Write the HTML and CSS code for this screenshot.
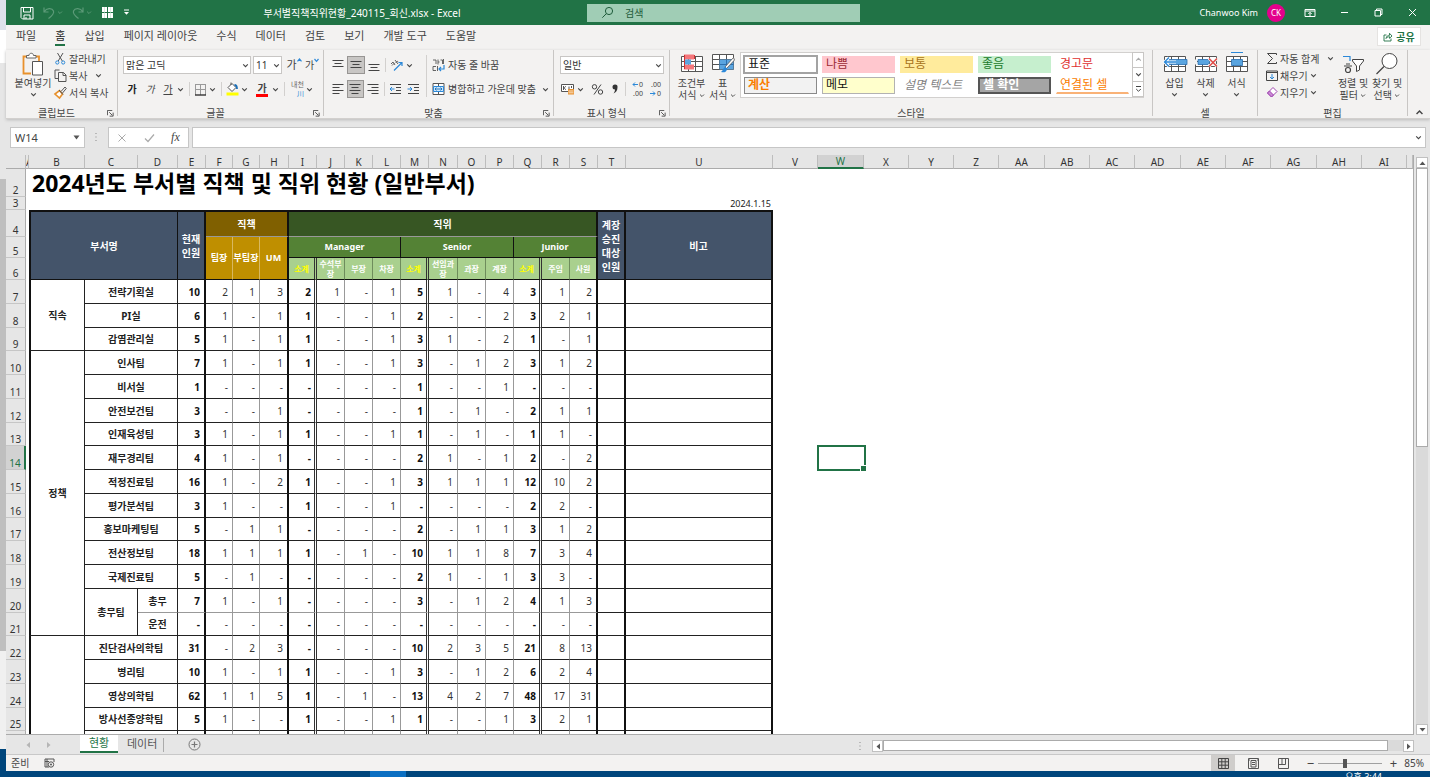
FILE: index.html
```html
<!DOCTYPE html>
<html lang="ko">
<head>
<meta charset="utf-8">
<title>부서별직책직위현황_240115_회신.xlsx - Excel</title>
<link rel="stylesheet" href="styles.css">
</head>
<body>
<svg class="defs" aria-hidden="true">
  <symbol id="chev" viewBox="0 0 7 7"><path d="M1.2 2.4 3.5 4.7 5.8 2.4" fill="none" stroke="currentColor" stroke-width="1.1"/></symbol>
  <symbol id="launch" viewBox="0 0 8 8"><path d="M.5 6V.5H6M2.5 2.5 6 6M7 3V7H3" fill="none" stroke="#444" /></symbol>
  <symbol id="gridtable" viewBox="0 0 24 20"><path d="M1.5 2.500h21v15h-21zM1.500 7.500h21M1.500 12.500h21M8.500 2.500v15M15.500 2.500v15" fill="#fff" stroke="#555"/></symbol>
</svg>
<div class="screen">
  <div class="desktop">
    <div class="behind"><i class="b1"></i><i class="b2"></i><i class="b3"></i><i class="b4"></i><i class="b5"></i><i class="b6"></i></div>
    <main class="app">
      <header class="titlebar">
        <div class="quick">
          <button aria-label="저장"><svg width="14" height="14" viewBox="0 0 14 14"><path d="M1 1.500h12v11.500H2.500L1 11.500zM3.500 1.500v4.500h7V1.500M4 13V9h6v4M6 11v2" fill="none" stroke="#fff"/></svg></button>
          <button class="dim" aria-label="실행 취소"><svg width="12" height="14" viewBox="0 0 12 14"><path d="M1 1.500v4.500h4.500M1.200 5.800C3.500 2 9 1.500 10.500 5c1 3-1.500 5-5 7.500" fill="none" stroke="currentColor" stroke-width="1.200"/></svg><svg class="ch"><use href="#chev"/></svg></button>
          <button class="dim" aria-label="다시 실행"><svg width="12" height="14" viewBox="0 0 12 14"><path d="M11 1.500v4.500H6.500M10.800 5.800C8.500 2 3 1.500 1.500 5c-1 3 1.500 5 5 7.500" fill="none" stroke="currentColor" stroke-width="1.200"/></svg><svg class="ch"><use href="#chev"/></svg></button>
          <button aria-label="표"><svg width="13" height="13" viewBox="0 0 13 13"><path d="M1 1h5v5H1zM7 1h5v5H7zM1 7h5v5H1zM7 7h5v5H7z" fill="#fff"/><path d="M3.500 1v11M9.500 1v11" stroke="#bfe0cd" stroke-width=".6"/></svg></button>
          <button aria-label="빠른 실행 도구 모음 사용자 지정"><svg width="7" height="7" viewBox="0 0 7 7"><path d="M1 1h5" stroke="#fff"/><path d="M1 3h5L3.500 5.800z" fill="#fff"/></svg></button>
        </div>
        <h1 class="doc">부서별직책직위현황_240115_회신.xlsx - Excel</h1>
        <label class="search"><svg width="13" height="13" viewBox="0 0 13 13"><circle cx="8" cy="5" r="3.600" fill="none" stroke="#1f5c3b"/><path d="M5.400 7.600 1.300 11.700" stroke="#1f5c3b"/></svg><input type="search" placeholder="검색" aria-label="검색"></label>
        <div class="account"><span>Chanwoo Kim</span><span class="avatar">CK</span></div>
        <div class="winbtns">
          <button aria-label="리본 표시 옵션"><svg width="12" height="10" viewBox="0 0 12 10"><path d="M1 1.500h10v7H1zM1 3h10M6 8V4.500M4.300 6 6 4.300 7.700 6" fill="none" stroke="#fff"/></svg></button>
          <button aria-label="최소화"><svg width="9" height="9" viewBox="0 0 9 9"><path d="M1 4.500h7" stroke="#fff"/></svg></button>
          <button aria-label="복원"><svg width="9" height="9" viewBox="0 0 9 9"><path d="M1 2.500h5.500V8H1zM2.500 2.500V1H8v5.500H6.500" fill="none" stroke="#fff"/></svg></button>
          <button aria-label="닫기"><svg width="9" height="9" viewBox="0 0 9 9"><path d="M1 1l7 7M8 1 1 8" stroke="#fff"/></svg></button>
        </div>
      </header>

      <nav class="tabs">
        <button>파일</button><button class="on">홈</button><button>삽입</button><button>페이지 레이아웃</button><button>수식</button><button>데이터</button><button>검토</button><button>보기</button><button>개발 도구</button><button>도움말</button>
        <button class="share"><svg width="10" height="10" viewBox="0 0 10 10"><path d="M3.500 3H1v6h7V6.500M3 6.500C3.500 4 5 3.300 6.500 3.300V1.300L9 4 6.500 6.300V4.700C5 4.700 4 5.300 3 6.500z" fill="none" stroke="#217346" stroke-width=".9"/></svg>공유</button>
      </nav>

      <section class="ribbon">
        <div class="group g-clip">
          <div class="body">
            <button class="big"><svg width="24" height="24" viewBox="0 0 24 24"><path d="M10 21.500H2.500v-17H18V9" fill="none" stroke="#e8912d" stroke-width="1.800"/><path d="M5.500 6V3.500H8C8 .5 12.500.5 12.500 3.500H15V6z" fill="#fff" stroke="#666"/><path d="M11.500 9.500h10v13.500h-10z" fill="#fff" stroke="#555"/></svg><span>붙여넣기</span><svg class="ch"><use href="#chev"/></svg></button>
            <div class="stack">
              <button><svg width="13" height="13" viewBox="0 0 13 13"><path d="M3.500 1 8.300 9M9 1 4.200 9" stroke="#555" fill="none"/><circle cx="3.300" cy="10.500" r="1.600" fill="none" stroke="#2b88d8"/><circle cx="9.200" cy="10.500" r="1.600" fill="none" stroke="#2b88d8"/></svg>잘라내기</button>
              <button><svg width="13" height="13" viewBox="0 0 13 13"><path d="M4 9.500H1v-8.500h4.500M4.500 3.500h5L12 6v6.500H4.500zM9 3.500V6.500h3" fill="none" stroke="#555"/></svg>복사<svg class="ch gapl"><use href="#chev"/></svg></button>
              <button><svg width="13" height="13" viewBox="0 0 13 13"><path d="M1 8 5.500 4.500 8.500 8 5.500 12z" fill="#fff" stroke="#e8912d" stroke-width="1.600"/><path d="M5 4 9 8.500M7 5.500 11 1l1.300 1.500L8.500 7" fill="none" stroke="#555"/></svg>서식 복사</button>
            </div>
          </div>
          <footer><span>클립보드</span><svg class="la"><use href="#launch"/></svg></footer>
        </div>

        <div class="group g-font">
          <div class="body rows">
            <div class="row">
              <span class="combo w-font"><select aria-label="글꼴"><option>맑은 고딕</option></select><svg class="ch"><use href="#chev"/></svg></span>
              <span class="combo w-size"><select aria-label="글꼴 크기"><option>11</option></select><svg class="ch"><use href="#chev"/></svg></span>
              <button class="ic w18 glyph">가<svg width="5" height="4" viewBox="0 0 5 4"><path d="M.5 3.300 2.500 1 4.500 3.300" fill="none" stroke="#2b88d8" stroke-width="1.200"/></svg></button><button class="ic w18 glyph sm">가<svg width="5" height="4" viewBox="0 0 5 4"><path d="M.5 1 2.500 3.300 4.500 1" fill="none" stroke="#2b88d8" stroke-width="1.200"/></svg></button>
            </div>
            <div class="row">
              <button class="ic w18 bold">가</button><button class="ic w18 ital">가</button><button class="ic w18 und">가</button><svg class="ch"><use href="#chev"/></svg>
              <i class="sep"></i>
              <button class="ic w18" aria-label="테두리"><svg width="13" height="13" viewBox="0 0 13 13"><path d="M1 1.500h11M1.500 1v11M11.500 1v11M6.500 1v11M1 6.500h11" fill="none" stroke="#999"/><path d="M1 12h11" stroke="#333" stroke-width="1.400"/></svg></button><svg class="ch"><use href="#chev"/></svg>
              <i class="sep"></i>
              <button class="ic w18" aria-label="채우기 색"><svg width="13" height="14" viewBox="0 0 13 14"><path d="M6 1.500 10 5.500 6 9.500 2 5.500z" fill="#fff" stroke="#555"/><path d="M5 3V.500" stroke="#555"/><path d="M8.500 3c2 0 2.500 1.500 2.500 4" fill="none" stroke="#1a6fb8" stroke-width="1.800"/><path d="M.5 10.500h12V13.500H.5z" fill="#ff0"/></svg></button><svg class="ch"><use href="#chev"/></svg>
              <button class="ic fontcolor">가</button><svg class="ch"><use href="#chev"/></svg>
              <i class="sep"></i>
              <button class="ic ruby"><span>내천</span><b>川</b></button><svg class="ch"><use href="#chev"/></svg>
            </div>
          </div>
          <footer><span>글꼴</span><svg class="la"><use href="#launch"/></svg></footer>
        </div>

        <div class="group g-align">
          <div class="body">
            <div class="rows">
              <div class="row">
                <button class="ic w18" aria-label="위쪽 맞춤"><svg width="12" height="14" viewBox="0 0 12 14"><path d="M.5 2.500h11M2.500 5.500h7M.5 8.500h11" stroke="#444"/></svg></button>
                <button class="ic w18 sel" aria-label="가운데 맞춤"><svg width="12" height="14" viewBox="0 0 12 14"><path d="M.5 3.500h11M2.500 6.500h7M.5 9.500h11" stroke="#444"/></svg></button>
                <button class="ic w18" aria-label="아래쪽 맞춤"><svg width="12" height="14" viewBox="0 0 12 14"><path d="M.5 6.500h11M2.500 9.500h7M.5 12.500h11" stroke="#444"/></svg></button>
                <i class="sep tall"></i>
                <button class="ic w18" aria-label="방향"><svg width="14" height="14" viewBox="0 0 14 14"><path d="M4 12.500 12 4.500M8.500 4.500H12V8" stroke="#2b88d8" fill="none" stroke-width="1.200"/><path d="M1 6l2-2 2 3M2 7.500 4.500 5M5 2l3 4M6 5c0-2 2-2 2-1" stroke="#555" fill="none" stroke-width=".9"/></svg></button><svg class="ch"><use href="#chev"/></svg>
              </div>
              <div class="row">
                <button class="ic w18" aria-label="왼쪽"><svg width="12" height="14" viewBox="0 0 12 14"><path d="M.5 2.500h11M.5 5.500h7M.5 8.500h11M.5 11.500h7" stroke="#444"/></svg></button>
                <button class="ic w18 sel" aria-label="가운데"><svg width="12" height="14" viewBox="0 0 12 14"><path d="M.5 2.500h11M2.500 5.500h7M.5 8.500h11M2.500 11.500h7" stroke="#444"/></svg></button>
                <button class="ic w18" aria-label="오른쪽"><svg width="12" height="14" viewBox="0 0 12 14"><path d="M.5 2.500h11M4.500 5.500h7M.5 8.500h11M4.500 11.500h7" stroke="#444"/></svg></button>
                <i class="sep tall"></i>
                <button class="ic w18" aria-label="내어쓰기"><svg width="13" height="14" viewBox="0 0 13 14"><path d="M1 2.500h11M7 5.500h5M7 8.500h5M1 11.500h11" stroke="#444"/><path d="M5.500 7H1M3 5 1 7l2 2" fill="none" stroke="#2b88d8"/></svg></button>
                <button class="ic w18" aria-label="들여쓰기"><svg width="13" height="14" viewBox="0 0 13 14"><path d="M1 2.500h11M7 5.500h5M7 8.500h5M1 11.500h11" stroke="#444"/><path d="M.5 7H5M3 5l2 2-2 2" fill="none" stroke="#2b88d8"/></svg></button>
              </div>
            </div>
            <i class="vsep"></i>
            <div class="rows">
              <div class="row"><button class="txt"><svg width="13" height="14" viewBox="0 0 13 14"><path d="M1 2h3v4M6 1.500v5M6 4h1.500M8.500 2h2v4M11.500 1v5M1 8.500h3M1 8.500v4h3M5.500 8v5" stroke="#555" fill="none" stroke-width=".9"/><path d="M12 7v4H7.500M9 9l-2 2 2 2" fill="none" stroke="#2b88d8" stroke-width="1.200"/></svg>자동 줄 바꿈</button></div>
              <div class="row"><button class="txt"><svg width="13" height="14" viewBox="0 0 13 14"><path d="M1 1.500h11v11H1zM6.500 1.500v3M6.500 9.500v3" fill="#fff" stroke="#555"/><path d="M1.500 4.500h10v5h-10z" fill="#cfe6f8" stroke="#2b88d8"/><path d="M3 7h7M4.500 5.500 3 7l1.500 1.500M8.500 5.500 10 7 8.500 8.500" fill="none" stroke="#1a6fb8" stroke-width=".9"/></svg>병합하고 가운데 맞춤</button><svg class="ch gap"><use href="#chev"/></svg></div>
            </div>
          </div>
          <footer><span>맞춤</span><svg class="la"><use href="#launch"/></svg></footer>
        </div>

        <div class="group g-num">
          <div class="body rows">
            <div class="row"><span class="combo w-num"><select aria-label="표시 형식"><option>일반</option></select><svg class="ch"><use href="#chev"/></svg></span></div>
            <div class="row">
              <button class="ic w18" aria-label="회계 표시 형식"><svg width="14" height="12" viewBox="0 0 14 12"><path d="M.5 1.500h12v7H.5z" fill="#fff" stroke="#555"/><path d="M5 3.500c-2 0-2 3 0 3M8 3.500v3M2.500 3v4M10.500 3v2" stroke="#555" fill="none"/><path d="M7 6h6v5.500H7z" fill="#e8912d"/><path d="M7.500 8h5M7.500 9.800h5" stroke="#fff" stroke-width=".7"/></svg></button><svg class="ch"><use href="#chev"/></svg>
              <button class="ic w18" aria-label="백분율"><svg width="13" height="13" viewBox="0 0 13 13"><circle cx="3.500" cy="3.800" r="2.200" fill="none" stroke="#444"/><circle cx="9.500" cy="9" r="2.200" fill="none" stroke="#444"/><path d="M10 1.500 3 11.500" stroke="#444"/></svg></button>
              <button class="ic w18" aria-label="쉼표"><svg width="8" height="12" viewBox="0 0 8 12"><path d="M4 1.500a2.500 2.500 0 0 1 2.500 2.800C6.500 7.500 5 9.500 2.500 10.500 3.500 9 4 8 4 6.500A2.500 2.500 0 0 1 4 1.500z" fill="#333"/></svg></button>
              <i class="sep"></i>
              <button class="ic w18 dec" aria-label="자릿수 늘림"><span><svg width="6" height="5" viewBox="0 0 6 5"><path d="M6 2.500H1M3 .500 1 2.500 3 4.500" fill="none" stroke="#2b88d8"/></svg>0</span><span>.00</span></button>
              <button class="ic w18 dec" aria-label="자릿수 줄임"><span>.00</span><span><svg width="6" height="5" viewBox="0 0 6 5"><path d="M0 2.500H5M3 .500 5 2.500 3 4.500" fill="none" stroke="#2b88d8"/></svg>0</span></button>
            </div>
          </div>
          <footer><span>표시 형식</span><svg class="la"><use href="#launch"/></svg></footer>
        </div>

        <div class="group g-style">
          <div class="body">
            <button class="big w32"><svg width="24" height="20"><use href="#gridtable"/><path d="M4 2.500h10v5H4zM4 12.500h10v5H4z" fill="#f4777c"/><path d="M4 7.500h7v5H4z" fill="#5aa5e0"/><path d="M4.500 3v14M14.500 3v4" stroke="#c33"/></svg><span>조건부<br>서식 <svg class="ch"><use href="#chev"/></svg></span></button>
            <button class="big w30"><svg width="24" height="22"><use href="#gridtable" height="20"/><path d="M8.500 7.500h14v10h-14z" fill="#5aa5e0"/><path d="M8.500 12.500h14M15.500 7.500v10" stroke="#2b6fae"/><path d="M22.500 5.500 14 15l1.500 1.500L23.500 8z" fill="#fff" stroke="#555" stroke-width=".8"/><path d="M14.500 15c-2 0-2 3-4.500 5 3 1 6 0 6-3.500z" fill="#2b88d8"/></svg><span>표<br>서식 <svg class="ch"><use href="#chev"/></svg></span></button>
            <div class="gallery">
              <div class="swatches">
                <button class="s-normal">표준</button><button class="s-bad">나쁨</button><button class="s-neutral">보통</button><button class="s-good">좋음</button><button class="s-warn">경고문</button>
                <button class="s-calc">계산</button><button class="s-memo">메모</button><button class="s-desc">설명 텍스트</button><button class="s-check">셀 확인</button><button class="s-link">연결된 셀</button>
              </div>
              <div class="gscroll"><button class="off" aria-label="위로"><svg class="ch flip"><use href="#chev"/></svg></button><button aria-label="아래로"><svg class="ch"><use href="#chev"/></svg></button><button aria-label="자세히"><svg width="7" height="8" viewBox="0 0 7 8"><path d="M1 1.500h5M1.200 4 3.500 6.300 5.800 4" fill="none" stroke="#444"/></svg></button></div>
            </div>
          </div>
          <footer><span>스타일</span></footer>
        </div>

        <div class="group g-cell">
          <div class="body">
            <button class="big w32"><svg width="24" height="20"><use href="#gridtable"/><path d="M6 7.500h18v5H6z" fill="#5aa5e0" stroke="#2b6fae" stroke-width=".8"/><path d="M13 10H2M6 5.500 1.500 10 6 14.500" fill="none" stroke="#fff" stroke-width="3"/><path d="M13 10H2M6 5.500 1.500 10 6 14.500" fill="none" stroke="#2b88d8" stroke-width="1.300"/></svg><span>삽입</span><svg class="ch"><use href="#chev"/></svg></button>
            <button class="big w30"><svg width="24" height="20"><use href="#gridtable"/><path d="M0 7.500h3v5H0z" fill="#f3f2f1"/><path d="M4 7.500h10l2 2.500-2 2.500H4z" fill="#5aa5e0" stroke="#2b6fae" stroke-width=".8"/><path d="M15 6.500l8 8M23 6.500l-8 8" stroke="#f3f2f1" stroke-width="3"/><path d="M15 6.500l8 8M23 6.500l-8 8" stroke="#e0443e" stroke-width="1.300"/></svg><span>삭제</span><svg class="ch"><use href="#chev"/></svg></button>
            <button class="big w32"><svg width="24" height="20"><use href="#gridtable"/><path d="M6.500 7.500h11v6h-11z" fill="#5aa5e0" stroke="#2b6fae" stroke-width=".8"/><path d="M6 .5h12" stroke="#2b88d8"/></svg><span>서식</span><svg class="ch"><use href="#chev"/></svg></button>
          </div>
          <footer><span>셀</span></footer>
        </div>

        <div class="group g-edit">
          <div class="body">
            <div class="stack">
              <button><svg width="12" height="13" viewBox="0 0 12 13"><path d="M10.500 3V1.500H1.500L6.500 6.500 1.500 11.500h9V10" fill="none" stroke="#444"/></svg>자동 합계<svg class="ch gapl"><use href="#chev"/></svg></button>
              <button><svg width="12" height="13" viewBox="0 0 12 13"><path d="M.5 2h11v9.500H.5zM.5 3.500h11" fill="none" stroke="#444"/><path d="M6 5v5M4 8l2 2 2-2" fill="none" stroke="#2b88d8"/></svg>채우기<svg class="ch"><use href="#chev"/></svg></button>
              <button><svg width="12" height="13" viewBox="0 0 12 13"><path d="M7 1.500 11 5.500 5.500 11 1.500 7z" fill="#fff" stroke="#a044b0"/><path d="M3.500 5 7.500 9 5.500 11 1.500 7z" fill="#c98ad4" stroke="#a044b0"/></svg>지우기<svg class="ch"><use href="#chev"/></svg></button>
            </div>
            <button class="big w34"><svg width="24" height="22" viewBox="0 0 24 22"><path d="M2 3.500h7V8" fill="none" stroke="#2b88d8" stroke-width="1.200"/><path d="M5 11h4M3 13h8" stroke="#444" stroke-width="1.200"/><circle cx="7" cy="17" r="2.500" fill="none" stroke="#444" stroke-width="1.200"/><path d="M11.500 6.500h11v1.500L18.500 13v4l-3 1.500V13L11.500 8z" fill="#fff" stroke="#444"/></svg><span>정렬 및<br>필터 <svg class="ch"><use href="#chev"/></svg></span></button>
            <button class="big w34"><svg width="24" height="24" viewBox="0 0 24 24"><circle cx="14.500" cy="9" r="7.500" fill="#fff" stroke="#444"/><path d="M9 14.500 1.500 22" stroke="#444" stroke-width="1.200"/></svg><span>찾기 및<br>선택 <svg class="ch"><use href="#chev"/></svg></span></button>
          </div>
          <footer><span>편집</span></footer>
        </div>
        <button class="collapse" aria-label="리본 축소"><svg class="ch flip"><use href="#chev"/></svg></button>
      </section>

      <section class="formula">
        <div class="namebox"><input value="W14" aria-label="이름 상자"><svg width="7" height="5" viewBox="0 0 7 5"><path d="M.5.500h6L3.500 4.500z" fill="#555"/></svg></div>
        <svg class="grip" width="4" height="10" viewBox="0 0 4 10"><path d="M2 1v1M2 4.500v1M2 8v1" stroke="#999" stroke-width="1.200"/></svg>
        <div class="fbtns">
          <button aria-label="취소"><svg width="10" height="10" viewBox="0 0 10 10"><path d="M1.500 1.500l7 7M8.500 1.500l-7 7" stroke="#aaa"/></svg></button>
          <button aria-label="입력"><svg width="11" height="10" viewBox="0 0 11 10"><path d="M1 5.500 4 8.500 10 1.500" fill="none" stroke="#aaa" stroke-width="1.200"/></svg></button>
          <button class="fx">fx</button>
        </div>
        <div class="finput"><input aria-label="수식 입력줄"><svg class="ch"><use href="#chev"/></svg></div>
      </section>

      <section class="work">
        <div class="sheet"><table id="grid"></table></div>
        <div class="vscroll"><button aria-label="위로 스크롤"><svg width="7" height="4" viewBox="0 0 7 4"><path d="M.5 4h6L3.500.500z" fill="#555"/></svg></button><i class="thumb"></i><i class="track"></i><button aria-label="아래로 스크롤"><svg width="7" height="4" viewBox="0 0 7 4"><path d="M.5 0h6L3.500 3.500z" fill="#555"/></svg></button></div>
      </section>

      <nav class="sheets">
        <div class="navs"><button aria-label="이전 시트"><svg width="4" height="6" viewBox="0 0 4 6"><path d="M4 0v6L.500 3z" fill="#b5b5b5"/></svg></button><button aria-label="다음 시트"><svg width="4" height="6" viewBox="0 0 4 6"><path d="M0 0v6L3.500 3z" fill="#b5b5b5"/></svg></button></div>
        <button class="tab on">현황</button><button class="tab">데이터</button><i class="tsep"></i>
        <button class="add" aria-label="새 시트"><svg width="13" height="13" viewBox="0 0 13 13"><circle cx="6.500" cy="6.500" r="5.500" fill="none" stroke="#777"/><path d="M6.500 3.500v6M3.500 6.500h6" stroke="#777" stroke-width="1.200"/></svg></button>
        <svg class="grip2" width="4" height="10" viewBox="0 0 4 10"><path d="M2 1v1M2 4.500v1M2 8v1" stroke="#999" stroke-width="1.200"/></svg>
        <div class="hscroll"><button aria-label="왼쪽으로 스크롤"><svg width="4" height="7" viewBox="0 0 4 7"><path d="M4 .5v6L.500 3.500z" fill="#555"/></svg></button><i class="thumb"></i><i class="track"></i><button aria-label="오른쪽으로 스크롤"><svg width="4" height="7" viewBox="0 0 4 7"><path d="M0 .5v6L3.500 3.500z" fill="#555"/></svg></button></div>
      </nav>

      <footer class="status">
        <span>준비</span>
        <svg class="macro" width="11" height="10" viewBox="0 0 11 10"><path d="M1 1h9M1 1v8h4M1 3.500h4M3 1v8M10 1v3" fill="none" stroke="#555"/><circle cx="7" cy="6.500" r="2.700" fill="#f3f2f1" stroke="#555"/><circle cx="7" cy="6.500" r="1" fill="#555"/></svg>
        <div class="views">
          <button class="on" aria-label="기본"><svg width="11" height="11" viewBox="0 0 11 11"><path d="M.5.500h10v10H.5zM.5 3.800h10M.5 7.200h10M3.800.500v10M7.200.500v10" fill="none" stroke="#444"/></svg></button>
          <button aria-label="페이지 레이아웃"><svg width="11" height="11" viewBox="0 0 11 11"><path d="M.5.500h10v10H.5zM3 2.500h5v6.500H3zM4 4.500h3M4 6.500h3M1 2h1M9 2h1" fill="none" stroke="#555"/></svg></button>
          <button aria-label="페이지 나누기"><svg width="11" height="11" viewBox="0 0 11 11"><path d="M.5.500h10v10H.5zM4 .5v6M7.500.500v6M.5 6.500h7" fill="none" stroke="#555"/></svg></button>
        </div>
        <button class="zb" aria-label="축소">−</button><input type="range" min="10" max="190" value="85" aria-label="확대/축소"><button class="zb" aria-label="확대">+</button><span class="pct">85%</span>
      </footer>
    </main>
  </div>
  <div class="taskbar"><i class="task"></i><span>오후 3:44</span></div>
</div>
<script src="grid.js"></script>
</body>
</html>
```
FILE: styles.css
```css
*{box-sizing:border-box}
html,body{height:100%}
body{margin:0;overflow:hidden;font:10px/14px "Noto Sans","Noto Sans CJK KR",sans-serif;color:#444}
button{font:inherit;color:inherit;border:0;background:none;padding:0;margin:0;display:flex;align-items:center;justify-content:center;white-space:nowrap}
input,select{font:inherit;color:inherit;border:0;background:none;padding:0;margin:0;outline:0;appearance:none;min-width:0}
svg{display:block;flex:none;overflow:visible}
i{font-style:normal}
.defs{display:none}
.ch{width:7px;height:7px}
.flip{transform:rotate(180deg)}
.screen{height:100vh;display:flex;flex-direction:column}
.desktop{flex:1;min-height:0;display:flex}
.behind{width:6px;display:flex;flex-direction:column;flex:none}
.b1{height:30px;background:#dde1ea}.b2{height:33px;background:#fff}.b3{height:116px;background:#e6e6e6}.b4{flex:1;background:#bfbfbf}.b5{height:98px;background:#f0f0f0}.b6{height:22px;background:#00467c}
.app{flex:1;min-width:0;display:flex;flex-direction:column;background:#e6e6e6}

.titlebar{height:25px;background:#217346;color:#fff;display:flex;align-items:center;flex:none}
.quick{display:flex;align-items:center;gap:9px;padding-left:14px;width:131px}
.quick .dim{color:#5c9a78;gap:2px}
.quick .dim .ch{width:6px}
.doc{flex:1;margin:0;text-align:center;font-size:10px;font-weight:400}
.search{width:273px;height:18px;background:#a0cdb5;display:flex;align-items:center;padding-left:14px;gap:11px;color:#1f5c3b}
.search input{flex:1}
.search input::placeholder{color:#1f5c3b;opacity:1}
.account{width:425px;display:flex;align-items:center;justify-content:flex-end;gap:9px;font-size:9px}
.avatar{width:18px;height:18px;border-radius:50%;background:#e3008c;font-size:8px;line-height:18px;text-align:center}
.winbtns{display:flex;width:145px;padding-left:8px}
.winbtns button{width:34px;height:25px}

.tabs{height:25px;background:#f3f2f1;display:flex;align-items:flex-start;gap:19px;padding:2px 9px 0 10px;font-size:11px;flex:none}
.tabs button{height:19px;border-bottom:2px solid transparent}
.tabs .on{border-color:#217346;color:#222}
.tabs .share{margin-left:auto;background:#fff;border:1px solid #e5e3e1;width:44px;color:#217346;gap:3px;font-weight:700;font-size:10px}

.ribbon{background:#f3f2f1;height:69px;display:flex;flex:none;border-bottom:1px solid #d2d0ce;box-shadow:0 1px 3px #bbb;position:relative}
.group{display:flex;flex-direction:column;border-right:1px solid #c8c6c4;height:66px;flex:none}
.body{flex:1;display:flex;min-height:0}
.group footer{height:14px;line-height:14px;display:flex;align-items:center;margin-bottom:-4px}
.group footer span{flex:1;text-align:center}
.la{width:7px;height:7px;margin-right:3px}
.g-clip{width:112px}.g-font{width:206px}.g-align{width:230px}.g-num{width:116px}.g-style{flex:1}.g-cell{width:105px}.g-edit{width:150px}
.big{flex-direction:column;justify-content:flex-start;line-height:12px;padding-top:2px}
.big>svg:first-child{height:24px}
.big>.ch{margin-top:2px}
.big span{margin-top:1px;text-align:center}
.big span .ch{display:inline-block;width:6px}
.g-clip .big{width:42px;margin-left:6px}
.w30{width:31px}.w32{width:31px}.w34{width:34px}
.stack{display:flex;flex-direction:column}
.stack button{justify-content:flex-start;height:17px;gap:2px}
.stack .gapl{margin-left:6px}
.rows{display:flex;flex-direction:column;padding-top:3px}
.row{display:flex;align-items:center;height:24px}
.g-font .rows,.g-num .rows{padding-left:5px}
.combo{position:relative;height:18px;border:1px solid #c8c6c4;background:#fff;display:flex}
.combo select{width:100%;padding-left:2px;color:#333}
.combo .ch{position:absolute;right:1px;top:5px}
.w-font{width:128px;margin-right:2px}.w-size{width:29px;margin-right:3px}.w-num{width:104px;margin-left:1px}
.ic{height:18px}
.w18{width:18px}
.glyph{font-size:11px}
.glyph svg{align-self:flex-start;margin-top:2px}
.sm{font-size:10px}
.bold{font-weight:700;color:#222}.ital{font-style:italic}.und{text-decoration:underline}
.sep{width:1px;height:14px;background:#d2d0ce;margin:0 1px 0 5px}
.sep.tall{margin:0 2px}
.fontcolor{font-weight:700;border-bottom:3px solid #f00;width:12px;height:15px;margin:0 4px 0 8px;line-height:10px}
.ruby{display:block;width:18px;font-size:7px;line-height:9px;text-align:right;color:#666;margin-right:2px}
.ruby span,.ruby b{display:block;font-weight:400}.ruby b{color:#2b88d8}
.sel{background:#c8c6c4;border:1px solid #979593}
.g-align .body{padding-left:5px}
.vsep{width:1px;height:42px;background:#d2d0ce;margin:5px 5px 0 4px}
.g-align .rows:first-child{width:93px}
.txt{gap:3px}
.gap{margin-left:6px}
.g-num .row>.ch{margin-right:4px}
.g-num .sep{margin:0 1px}
.dec{display:block;font-size:7px;line-height:9px}
.dec span{display:flex;align-items:center;justify-content:flex-end;gap:1px;padding-right:2px}
.g-style .body{padding-left:6px}
.gallery{flex:1;height:46px;margin:2px 8px 0 2px;border:1px solid #d2d0ce;background:#fff;display:flex}
.swatches{flex:1;display:grid;grid-template-columns:repeat(5,1fr);gap:4px 5px;padding:3px}
.swatches button{justify-content:flex-start;font-size:12px;line-height:14px;padding-left:3px;border:1px solid transparent}
.swatches .s-normal{color:#111;outline:2px solid #a3a3a3;outline-offset:-1px}
.swatches .s-bad{background:#ffc7ce;color:#9c2a35}
.swatches .s-neutral{background:#ffeb9c;color:#a8731a}
.swatches .s-good{background:#c6efce;color:#1b7a2b}
.swatches .s-warn{color:#e03030}
.swatches .s-calc{background:#f2f2f2;border-color:#8a8a8a;color:#fa7d00;font-weight:700}
.swatches .s-memo{background:#ffffcc;border-color:#b2b2b2;color:#111}
.swatches .s-desc{color:#7f7f7f;font-style:italic}
.swatches .s-check{background:#a5a5a5;border:2px solid #555;color:#fff;font-weight:700;line-height:12px}
.swatches .s-link{color:#fa7d00;border-bottom:2px solid #f9b277}
.gscroll{width:11px;display:flex;flex-direction:column}
.gscroll button{flex:1;border:1px solid #c8c6c4;margin:-1px -1px 0 0}
.gscroll .off{color:#aaa}
.g-cell .body{padding-left:6px}
.g-edit .stack{width:78px;padding-left:8px}
.collapse{width:22px;align-items:flex-end;padding-bottom:1px}
.collapse .ch{width:9px;height:9px}

.formula{display:flex;height:36px;padding:8px 4px 7px 4px;align-items:stretch;flex:none}
.formula>div{background:#fff;border:1px solid #c6c6c6;display:flex;align-items:center}
.namebox{width:75px;padding:0 4px;font-size:11px}
.namebox input{flex:1}
.grip{margin:5px 10px 0 9px}
.fbtns{width:81px;justify-content:space-around}
.fx{font:italic 12px "Liberation Serif",serif}
.finput{flex:1;margin-left:3px;padding-right:3px}
.finput input{flex:1}

.work{flex:1;min-height:0;display:flex}
.sheet{flex:1;min-width:0;overflow:hidden;background:#fff;border-right:1px solid #ababab;border-bottom:1px solid #ababab}
.vscroll{width:16px;display:flex;flex-direction:column;align-items:stretch;padding:2px 2px 0}
.vscroll button,.hscroll button{background:#fff;border:1px solid #c0c0c0;height:11px;flex:none}
.vscroll .thumb{flex:278 0 0;background:#fff;border:1px solid #ababab}
.vscroll .track{flex:278 0 0;background:#dadada}

#grid{width:100%;table-layout:fixed;border-collapse:separate;border-spacing:0;color:#333}
#grid th,#grid td{padding:0;overflow:hidden}
#grid th{font-weight:400}
.colhead th{height:14px;line-height:12px;background:#e6e6e6;border-right:1px solid #bdbdbd;border-bottom:1px solid #ababab}
.colhead .cur{background:#d2d2d2;border-bottom:2px solid #217346;color:#217346}
#grid .rh{background:#e6e6e6;border-right:1px solid #ababab;border-bottom:1px solid #c6c6c6;vertical-align:bottom;line-height:12px}
#grid .rh.cur{background:#d2d2d2;color:#217346;border-right:2px solid #217346}
.r2 th{height:28px}.r3 th{height:13px}.r4 th{height:27px}.r5 th{height:21px}.r6 th{height:22px}
.d th{height:24px}.d:nth-child(4n) th{height:23px}
#grid .title{font-size:23px;line-height:26px;font-weight:700;color:#000;padding-left:3px;white-space:nowrap;overflow:visible}
#grid .date{font-size:9px;line-height:12px;text-align:right;padding-right:2px;color:#222}
.h{color:#fff;font-weight:700;text-align:center;line-height:14px;border-bottom:1px solid #111;border-right:1px solid #111}
.r4 .h{border-top:2px solid #111}
.navy{background:#44546a}.gold{background:#806000}.gold2{background:#bf8f00;border-right-color:#d8b860}
.g1{background:#375623}.g2{background:#548235;font-size:9px}.g3{background:#a9d08e;border-right-color:#6e8c5c;font-size:8px;line-height:10px}
.r4 .gold,.r4 .g1{border-bottom-color:#999}
.r5 .gold2{font-size:9px}
.sub{color:#ff0}
#grid .lb{border-left:2px solid #111}
#grid .rb{border-right:2px solid #111}
#grid .dbl{border-right:3px double #333}
.n{text-align:right;padding-right:4px!important;border-right:1px solid #999;border-bottom:1px solid #222}
.n.dbl{padding-right:3px!important}
.k{font-weight:700;color:#111}
.name{text-align:center;font-weight:700;color:#222;border-right:1px solid #222;border-bottom:1px solid #222;line-height:14px}
.soft .n,.soft .name{border-bottom-color:#999}
.soft .rb.big2,.soft .team{border-bottom-color:#222}
#grid .active{overflow:visible;position:relative}
.active i{position:absolute;inset:-1px -2px -1px -1px;border:2px solid #217346}
.active i::after{content:"";position:absolute;right:-3px;bottom:-3px;width:5px;height:5px;background:#217346;border:1px solid #fff}

.sheets{height:20px;display:flex;align-items:stretch;flex:none;font-size:11px;border-bottom:1px solid #c8c8c8;padding-right:16px}
.navs{display:flex;width:74px;padding-left:20px;gap:17px}
.tab{padding:0 6px 0 9px;color:#555;height:18px}
.tab.on{background:#fff;color:#217346;border-bottom:2px solid #217346;width:38px;padding:0}
.tsep{width:1px;height:14px;margin:3px 24px 0 0;background:#ababab}
.grip2{margin:6px 10px 0 auto}
.hscroll{width:542px;display:flex;padding:5px 0 3px}
.hscroll button{width:11px;height:12px}
.hscroll .thumb{flex:1;border:1px solid #ababab;background:#fff}
.hscroll .track{width:15px;background:#dadada}

.status{height:16px;background:#f3f2f1;display:flex;align-items:center;padding:0 6px 0 5px;flex:none}
.macro{margin-left:15px}
.views{display:flex;gap:6px;margin-left:auto;margin-right:9px;align-self:stretch}
.views button{width:24px}
.views .on{background:#cfcdcb}
.zb{width:13px;font-size:13px}
.status input{width:64px;height:12px;margin:0 5px 0 1px}
.status input::-webkit-slider-runnable-track{height:1px;background:#a0a0a0}
.status input::-webkit-slider-thumb{appearance:none;width:4px;height:9px;margin-top:-4px;background:#555}
.pct{width:24px;text-align:right}
.taskbar{height:6px;background:#00467c;flex:none;display:flex;overflow:hidden;color:#fff;padding-right:48px;justify-content:space-between}
.task{width:36px;margin-left:370px;background:#0b6fc2}
.taskbar span{font-size:9px;line-height:12px}
```
FILE: grid.js
```js
const widths = [20, 3, 56, 53, 40, 28, 27, 27, 29, 28, 28, 28, 28, 28, 29, 28, 28, 28, 28, 28, 28, 147, 45, 46, 45, 45, 45, 46, 45, 45, 46, 45, 45, 46, 45, 45];
const letters = ['', 'A', 'B', 'C', 'D', 'E', 'F', 'G', 'H', 'I', 'J', 'K', 'L', 'M', 'N', 'O', 'P', 'Q', 'R', 'S', 'T', 'U', 'V', 'W', 'X', 'Y', 'Z', 'AA', 'AB', 'AC', 'AD', 'AE', 'AF', 'AG', 'AH', 'AI'];
const rows = [
  ['전략기획실', '10 2 1 3 2 1 - 1 5 1 - 4 3 1 2'],
  ['PI실', '6 1 - 1 1 - - 1 2 - - 2 3 2 1'],
  ['감염관리실', '5 1 - 1 1 - - 1 3 1 - 2 1 - 1'],
  ['인사팀', '7 1 - 1 1 - - 1 3 - 1 2 3 1 2'],
  ['비서실', '1 - - - - - - - 1 - - 1 - - -'],
  ['안전보건팀', '3 - - 1 - - - - 1 - 1 - 2 1 1'],
  ['인재육성팀', '3 1 - 1 1 - - 1 1 - 1 - 1 1 -'],
  ['재무경리팀', '4 1 - 1 - - - - 2 1 - 1 2 - 2'],
  ['적정진료팀', '16 1 - 2 1 - - 1 3 1 1 1 12 10 2'],
  ['평가분석팀', '3 1 - - 1 - - 1 - - - - 2 2 -'],
  ['홍보마케팅팀', '5 - 1 1 - - - - 2 - 1 1 3 1 2'],
  ['전산정보팀', '18 1 1 1 1 - 1 - 10 1 1 8 7 3 4'],
  ['국제진료팀', '5 - 1 - - - - - 2 1 - 1 3 3 -'],
  ['총무', '7 1 - 1 - - - - 3 - 1 2 4 1 3'],
  ['운전', '- - - - - - - - - - - - - - -'],
  ['진단검사의학팀', '31 - 2 3 - - - - 10 2 3 5 21 8 13'],
  ['병리팀', '10 1 - 1 1 - - 1 3 - 1 2 6 2 4'],
  ['영상의학팀', '62 1 1 5 1 - 1 - 13 4 2 7 48 17 31'],
  ['방사선종양학팀', '5 1 - - 1 - - 1 1 - - 1 3 2 1'],
  ['', '              ']
];
const rh = n => `<th class="rh${n === 14 ? ' cur' : ''}">${n < 26 ? n : ''}</th><td></td>`;
let html = '<colgroup>' + widths.map(w => `<col style="width:${w}px">`).join('') + '<col></colgroup>';
html += '<thead><tr class="colhead">' + letters.map(l => `<th class="${l === 'W' ? 'cur' : ''}">${l}</th>`).join('') + '<th></th></tr></thead><tbody>';
html += `<tr class="r2">${rh(2)}<td class="title" colspan="20">2024년도 부서별 직책 및 직위 현황 (일반부서)</td></tr>`;
html += `<tr class="r3">${rh(3)}<td colspan="19"></td><td class="date">2024.1.15</td></tr>`;
html += `<tr class="r4">${rh(4)}<td class="h navy lb" colspan="3" rowspan="3">부서명</td><td class="h navy rb" rowspan="3">현재<br>인원</td>
<td class="h gold rb" colspan="3">직책</td><td class="h g1 rb" colspan="11">직위</td>
<td class="h navy rb" rowspan="3">계장<br>승진<br>대상<br>인원</td><td class="h navy rb" rowspan="3">비고</td></tr>`;
html += `<tr class="r5">${rh(5)}<td class="h gold2" rowspan="2">팀장</td><td class="h gold2" rowspan="2">부팀장</td><td class="h gold2 rb" rowspan="2">UM</td>
<td class="h g2" colspan="4">Manager</td><td class="h g2" colspan="4">Senior</td><td class="h g2 rb" colspan="3">Junior</td></tr>`;
const subs = ['소계', '수석부장', '부장', '차장', '소계', '선임과장', '과장', '계장', '소계', '주임', '사원'];
html += `<tr class="r6">${rh(6)}` + subs.map((s, i) => `<td class="h g3${s === '소계' ? ' sub dbl' : ''}${i === 10 ? ' rb' : ''}">${s}</td>`).join('') + '</tr>';
rows.forEach(([name, values], i) => {
  const r = i + 7;
  html += `<tr class="d${r === 20 ? ' soft' : ''}">${rh(r)}`;
  if (r === 7) html += '<td class="name lb" rowspan="3">직속</td>';
  if (r === 10) html += '<td class="name lb" rowspan="12">정책</td>';
  if (r === 22) html += '<td class="name lb" rowspan="5"></td>';
  if (r === 20) html += '<td class="name team" rowspan="2">총무팀</td>';
  html += `<td class="name"${r === 20 || r === 21 ? '' : ' colspan="2"'}>${name}</td>`;
  values.split(' ').forEach((v, c) => {
    const total = c === 4 || c === 8 || c === 12;
    html += `<td class="n${c === 0 || total ? ' k' : ''}${total ? ' dbl' : ''}${c === 0 || c === 3 || c === 14 ? ' rb' : ''}">${v}</td>`;
  });
  html += '<td class="n rb big2"></td><td class="n rb big2"></td>';
  if (r === 14) html += '<td></td><td class="active"><i></i></td>';
  html += '</tr>';
});
document.getElementById('grid').innerHTML = html + '</tbody>';
```
